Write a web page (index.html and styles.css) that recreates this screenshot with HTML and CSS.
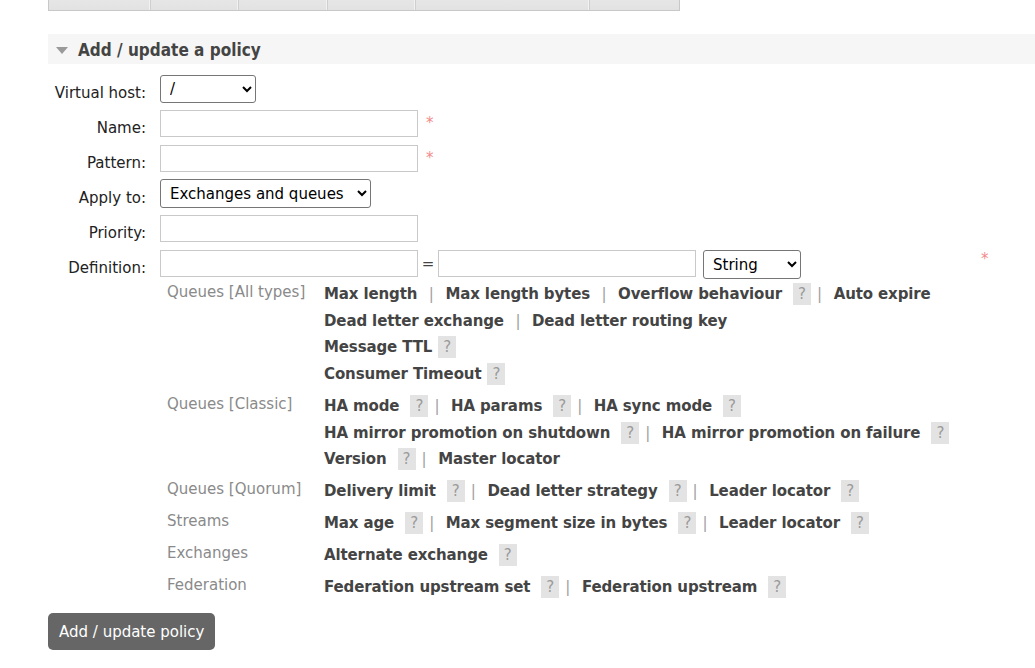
FILE: index.html
```html
<!DOCTYPE html>
<html>
<head>
<meta charset="utf-8">
<link rel="stylesheet" href="styles.css">
</head>
<body>
<div class="tablebar">
  <div class="cell c1"></div>
  <div class="cell c2"></div>
  <div class="cell c3"></div>
  <div class="cell c4"></div>
  <div class="cell c5"></div>
  <div class="cell c6"></div>
</div>

<div class="section-head">
  <span class="tri"></span>
  <h2>Add / update a policy</h2>
</div>

<form class="form">
  <div class="row">
    <label class="lbl">Virtual host:</label>
    <select class="sel sel-vhost"><option>/</option></select>
  </div>
  <div class="row">
    <label class="lbl">Name:</label>
    <input class="txt" type="text">
    <span class="mand">*</span>
  </div>
  <div class="row">
    <label class="lbl">Pattern:</label>
    <input class="txt" type="text">
    <span class="mand">*</span>
  </div>
  <div class="row">
    <label class="lbl">Apply to:</label>
    <select class="sel sel-apply"><option>Exchanges and queues</option></select>
  </div>
  <div class="row">
    <label class="lbl">Priority:</label>
    <input class="txt" type="text">
  </div>
  <div class="row row-def">
    <label class="lbl">Definition:</label>
    <input class="txt" type="text">
    <span class="eq">=</span>
    <input class="txt" type="text">
    <select class="sel sel-type"><option>String</option></select>
    <span class="mand mand-def">*</span>
  </div>

  <div class="helptable">
    <div class="group">
      <div class="glabel">Queues [All types]</div>
      <div class="links">
        <div class="line"><span class="arg">Max length</span><span class="sep">|</span><span class="arg">Max length bytes</span><span class="sep">|</span><span class="arg">Overflow behaviour</span><span class="help">?</span><span class="sep">|</span><span class="arg">Auto expire</span></div>
        <div class="line"><span class="arg">Dead letter exchange</span><span class="sep">|</span><span class="arg">Dead letter routing key</span></div>
        <div class="line"><span class="arg">Message TTL</span><span class="help tight">?</span></div>
        <div class="line"><span class="arg">Consumer Timeout</span><span class="help tight">?</span></div>
      </div>
    </div>
    <div class="group">
      <div class="glabel">Queues [Classic]</div>
      <div class="links">
        <div class="line"><span class="arg">HA mode</span><span class="help">?</span><span class="sep">|</span><span class="arg">HA params</span><span class="help">?</span><span class="sep">|</span><span class="arg">HA sync mode</span><span class="help">?</span></div>
        <div class="line"><span class="arg">HA mirror promotion on shutdown</span><span class="help">?</span><span class="sep">|</span><span class="arg">HA mirror promotion on failure</span><span class="help">?</span></div>
        <div class="line"><span class="arg">Version</span><span class="help">?</span><span class="sep">|</span><span class="arg">Master locator</span></div>
      </div>
    </div>
    <div class="group">
      <div class="glabel">Queues [Quorum]</div>
      <div class="links">
        <div class="line"><span class="arg">Delivery limit</span><span class="help">?</span><span class="sep">|</span><span class="arg">Dead letter strategy</span><span class="help">?</span><span class="sep">|</span><span class="arg">Leader locator</span><span class="help">?</span></div>
      </div>
    </div>
    <div class="group">
      <div class="glabel">Streams</div>
      <div class="links">
        <div class="line"><span class="arg">Max age</span><span class="help">?</span><span class="sep">|</span><span class="arg">Max segment size in bytes</span><span class="help">?</span><span class="sep">|</span><span class="arg">Leader locator</span><span class="help">?</span></div>
      </div>
    </div>
    <div class="group">
      <div class="glabel">Exchanges</div>
      <div class="links">
        <div class="line"><span class="arg">Alternate exchange</span><span class="help">?</span></div>
      </div>
    </div>
    <div class="group">
      <div class="glabel">Federation</div>
      <div class="links">
        <div class="line"><span class="arg">Federation upstream set</span><span class="help">?</span><span class="sep">|</span><span class="arg">Federation upstream</span><span class="help">?</span></div>
      </div>
    </div>
  </div>

  <button class="btn" type="button">Add / update policy</button>
</form>
</body>
</html>
```

FILE: styles.css
```css
html, body {
  margin: 0;
  padding: 0;
  background: #fff;
  overflow: hidden;
}
body {
  font-family: "DejaVu Sans", Verdana, sans-serif;
  font-size: 15px;
  color: #333;
  width: 1035px;
  height: 668px;
}

/* top table remnant */
.tablebar {
  display: flex;
  margin-left: 48px;
  width: 630px;
  height: 10px;
  background: linear-gradient(#e6e6e6, #e2e2e2);
  border: 1px solid #c8c8c8;
  border-top: none;
  box-sizing: content-box;
}
.cell {
  height: 10px;
  border-right: 1px solid #cfcfcf;
  box-shadow: inset -1px 0 0 #f2f2f2;
}
.cell:last-child { border-right: none; box-shadow: none; }
.c1 { width: 101px; }
.c2 { width: 87px; }
.c3 { width: 88px; }
.c4 { width: 87px; }
.c5 { width: 173px; }
.c6 { flex: 1; }

/* section header */
.section-head {
  margin-top: 23px;
  margin-left: 48px;
  height: 30px;
  box-sizing: border-box;
  padding-top: 2px;
  background: #f6f6f6;
  display: flex;
  align-items: center;
}
.tri {
  width: 0;
  height: 0;
  margin-left: 8px;
  margin-top: 0;
  border-left: 6.5px solid transparent;
  border-right: 6.5px solid transparent;
  border-top: 7px solid #9a9a9a;
}
.section-head h2 {
  margin: 0 0 0 10px;
  font-family: "DejaVu Sans Condensed", "DejaVu Sans", sans-serif;
  font-stretch: condensed;
  font-weight: bold;
  font-size: 17px;
  color: #444;
  line-height: 26px;
}

/* form */
.form {
  margin: 11px 0 0 48px;
}
.row {
  display: flex;
  align-items: flex-start;
  height: 35px;
}
.row-def { height: 27px; }
.lbl {
  width: 98px;
  margin-right: 14px;
  text-align: right;
  padding-top: 9px;
  line-height: 18px;
  color: #222;
  white-space: nowrap;
}
.txt {
  width: 258px;
  height: 27px;
  box-sizing: border-box;
  border: 1px solid #c9c9c9;
  margin: 0;
  padding: 2px 4px;
  font: inherit;
  background: #fff;
}
.sel {
  height: 28px;
  box-sizing: border-box;
  border: 1px solid #767676;
  border-radius: 3px;
  background-color: #fff;
  font-family: "DejaVu Sans", sans-serif;
  font-size: 15px;
  color: #000;
  margin: 0;
  padding: 0 4px 0 5px;
}
.sel-vhost { width: 96px; }
.sel-apply { width: 211px; height: 29px; margin-top: -1px; }
.sel-type { width: 98px; height: 29px; margin-left: 7px; }
.mand {
  color: #f28b8b;
  margin-left: 8px;
  padding-top: 4px;
  line-height: 18px;
  font-size: 15px;
}
.mand-def {
  margin-left: 180px;
  padding-top: 0;
}
.eq {
  width: 20px;
  text-align: center;
  line-height: 28px;
  color: #444;
}

/* help table */
.helptable {
  margin-left: 119px;
  margin-top: 1px;
}
.group {
  display: flex;
  padding: 2.67px 0;
}
.glabel {
  width: 157px;
  color: #8a8a8a;
  line-height: 22.5px;
  white-space: nowrap;
}
.links { display: flex; flex-direction: column; }
.line {
  height: 26.67px;
  display: flex;
  align-items: center;
  white-space: nowrap;
}
.arg {
  font-weight: bold;
  color: #444;
  letter-spacing: -0.12px;
}
.sep {
  color: #a0a0a0;
  margin: 0 11.5px;
}
.help + .sep { margin-left: 6px; }
.help {
  display: inline-block;
  width: 18px;
  height: 22px;
  line-height: 22px;
  text-align: center;
  background: #e3e3e3;
  color: #9a9a9a;
  margin-left: 11px;
}
.help.tight { margin-left: 6px; }

/* button */
.btn {
  display: block;
  margin: 10px 0 0 0;
  height: 37px;
  padding: 0 11px;
  border: none;
  border-radius: 5px;
  background: #666;
  color: #fff;
  font-family: "DejaVu Sans", sans-serif;
  font-size: 15px;
}
```
